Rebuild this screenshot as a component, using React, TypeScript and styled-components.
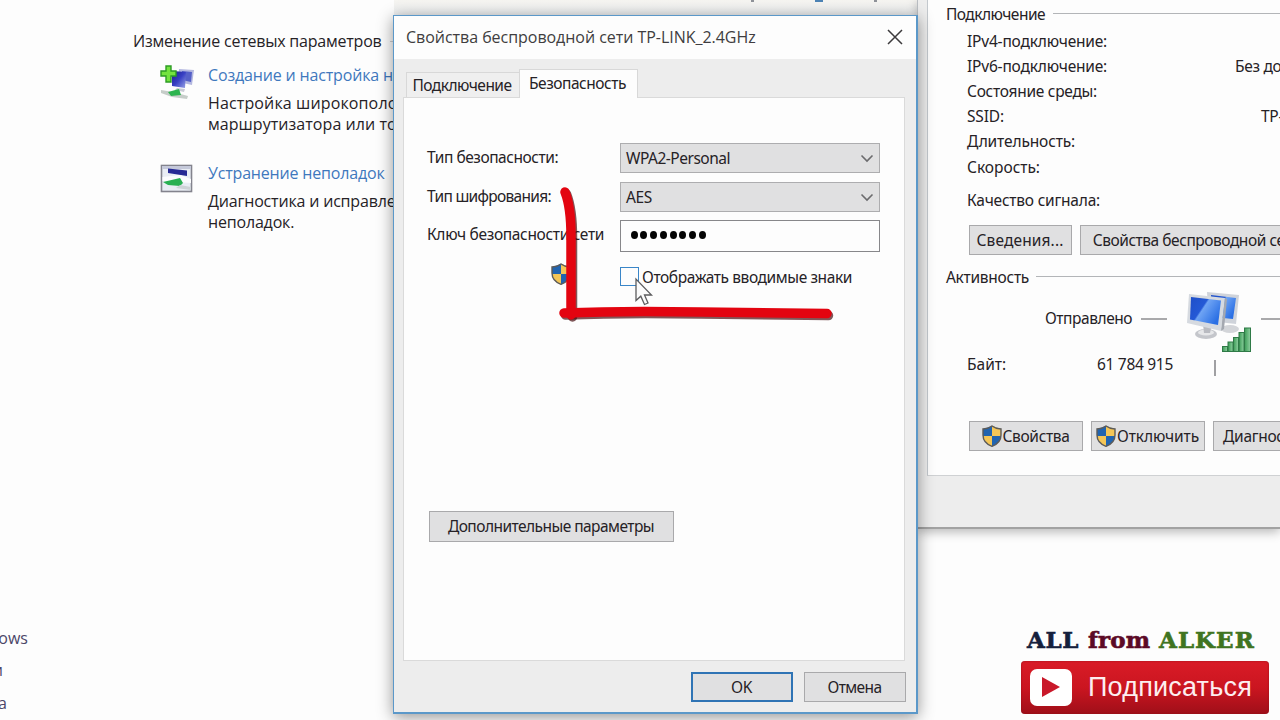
import styled, { createGlobalStyle } from 'styled-components';

const GlobalStyle = createGlobalStyle`
  * {
    box-sizing: border-box;
  }

  body {
    margin: 0;
    overflow: hidden;
    background: #fdfdfd;
  }
`;

const tahoma = `'Noto Sans', 'DejaVu Sans', sans-serif`;
const segoe = `'Open Sans', 'Noto Sans', sans-serif`;

const Desktop = styled.div`
  position: relative;
  width: 1280px;
  height: 720px;
  overflow: hidden;
  background: #fdfdfd;
  font-family: ${segoe};
  font-size: 16px;
  color: #262226;
`;

const Txt = styled.span<{ $ls?: number }>`
  letter-spacing: ${(p) => p.$ls ?? 0}px;
  white-space: pre;
`;

/* control panel page behind the dialogs */

const Page = styled.div`
  display: flex;
  width: 918px;
  height: 720px;
`;

const TopStrip = styled.div`
  position: absolute;
  top: 0;
  left: 394px;
  display: flex;
  align-items: flex-start;
  width: 523px;
  height: 15px;
  background: linear-gradient(#f6f5f1, #eceef0);
`;

const Tick = styled.i<{ $gap: number; $w: number; $color: string }>`
  margin-left: ${(p) => p.$gap}px;
  width: ${(p) => p.$w}px;
  height: 2px;
  background: ${(p) => p.$color};
`;

const Sidebar = styled.nav`
  display: flex;
  flex-direction: column;
  justify-content: flex-end;
  width: 132px;
  padding-bottom: 1px;
  color: #4b4668;
`;

const SideLink = styled.span<{ $end: number }>`
  display: flex;
  justify-content: flex-end;
  width: ${(p) => p.$end}px;
  height: 32.5px;
  overflow: hidden;
  font-size: 16px;
  line-height: 32px;
`;

const Main = styled.main`
  flex: 1;
  padding-top: 30px;
`;

const Heading = styled.div`
  display: flex;
  align-items: center;
  gap: 8px;
  height: 22px;
  padding-left: 1px;

  &::after {
    content: '';
    flex: 1;
    height: 1px;
    background: #cfcfd2;
  }
`;

const Task = styled.section<{ $top: number }>`
  display: grid;
  grid-template-columns: 48px 1fr;
  margin: ${(p) => p.$top}px 0 0 28px;
`;

const TaskText = styled.div`
  display: flex;
  flex-direction: column;
  line-height: 21px;
`;

const TaskLink = styled.a`
  margin-bottom: 7px;
  color: #3f78bd;
`;

/* shared controls */

const Button = styled.button<{ $w?: number; $h?: number; $primary?: boolean }>`
  display: flex;
  flex: none;
  align-items: center;
  justify-content: center;
  gap: 1px;
  width: ${(p) => p.$w}px;
  height: ${(p) => p.$h ?? 30}px;
  padding: 0 1px 1px 0;
  border: ${(p) => (p.$primary ? '2px solid #2f74b5' : '1px solid #a9a9ab')};
  background: #e0e0e1;
  color: #262226;
  font-family: ${tahoma};
  font-size: 15.5px;
  white-space: nowrap;
`;

/* connection status window */

const StatusWindow = styled.section`
  position: absolute;
  top: 0;
  left: 917px;
  width: 363px;
  height: 529px;
  padding-left: 9px;
  border-left: 1px solid #b9bdc2;
  border-bottom: 2px solid #a2a2a2;
  background: #ededed;
  box-shadow: 0 3px 10px rgba(0, 0, 0, 0.28);
  font-family: ${tahoma};
  font-size: 15.5px;
`;

const StatusPanel = styled.div`
  height: 476px;
  padding-left: 18px;
  border-left: 1px solid #c3c8cd;
  border-bottom: 1px solid #cfd1d3;
  background: #fdfdfd;
  overflow: hidden;
`;

const GroupTitle = styled.div<{ $h: number; $gap: number }>`
  display: flex;
  align-items: center;
  gap: ${(p) => p.$gap}px;
  height: ${(p) => p.$h}px;

  &::after {
    content: '';
    flex: 1;
    height: 1px;
    margin-bottom: 1px;
    background: #b3b5b8;
  }
`;

const InfoRow = styled.div<{ $split: number; $h?: number }>`
  display: grid;
  grid-template-columns: ${(p) => p.$split}px 1fr;
  align-items: center;
  height: ${(p) => p.$h ?? 25.2}px;
  padding-left: 21px;
`;

const ButtonRow = styled.div<{ $gap: number; $top?: number }>`
  display: flex;
  gap: ${(p) => p.$gap}px;
  margin-top: ${(p) => p.$top ?? 0}px;
  padding-left: 23px;
`;

const Activity = styled.div`
  display: grid;
  grid-template-columns: 95px 27px 20px 66px 6px 30px;
  align-items: start;
  height: 55px;
  padding-left: 99px;
`;

const SentLabel = styled.span`
  line-height: 40px;
`;

const Dash = styled.i<{ $col: number }>`
  grid-column: ${(p) => p.$col};
  grid-row: 1;
  height: 2px;
  margin-top: 20px;
  margin-left: ${(p) => (p.$col === 2 ? 1 : 2)}px;
  background: #a9a9ab;
`;

const Bytes = styled.div`
  display: flex;
  align-items: center;
  height: 22px;
  padding-left: 21px;
`;

const ByteLabel = styled.span`
  width: 130px;
`;

const ByteCount = styled.span`
  width: 117px;
`;

const VBar = styled.i`
  width: 2px;
  height: 16px;
  margin-top: 7px;
  background: #a0a0a3;
`;

/* wireless properties dialog */

const Dialog = styled.section`
  position: absolute;
  top: 15px;
  left: 393px;
  display: flex;
  flex-direction: column;
  width: 525px;
  height: 699px;
  border: solid #5b98c9;
  border-width: 1px 2px 2px 1px;
  background: #ededed;
  box-shadow: 0 3px 15px rgba(0, 0, 0, 0.42);
  font-family: ${tahoma};
  font-size: 15.5px;
`;

const TitleBar = styled.header`
  display: flex;
  align-items: center;
  justify-content: space-between;
  height: 43px;
  padding: 0 13px 1px 12px;
  background: #fdfdfd;
  color: #403d40;
  font-family: ${segoe};
  font-size: 16px;
`;

const Tabs = styled.div`
  display: flex;
  align-items: flex-end;
  height: 38px;
  padding-left: 12px;
`;

const Tab = styled.div<{ $active?: boolean; $w: number }>`
  display: flex;
  align-items: center;
  justify-content: center;
  width: ${(p) => p.$w}px;
  height: ${(p) => (p.$active ? 29 : 25)}px;
  padding-right: 2px;
  padding-bottom: ${(p) => (p.$active ? 2 : 0)}px;
  margin-bottom: ${(p) => (p.$active ? -1 : 0)}px;
  border: 1px solid #d8d8d8;
  border-bottom: 0;
  border-right-width: ${(p) => (p.$active ? 1 : 0)}px;
  background: ${(p) => (p.$active ? '#fdfdfd' : '#efefef')};
  z-index: ${(p) => (p.$active ? 1 : 0)};
`;

const TabPage = styled.div`
  width: 502px;
  height: 564px;
  margin-left: 9px;
  padding: 45px 23px 0;
  border: 1px solid #dadada;
  background: #fdfdfd;
`;

const Field = styled.div<{ $h: number }>`
  display: grid;
  grid-template-columns: 193px 260px;
  align-items: start;
  height: ${(p) => p.$h}px;
`;

const FieldLabel = styled.label`
  line-height: 29px;
  white-space: nowrap;
`;

const Select = styled.div`
  display: flex;
  align-items: center;
  justify-content: space-between;
  height: 30px;
  padding: 0 5px;
  border: 1px solid #adadaf;
  background: #e0e0e1;
`;

const KeyInput = styled.div`
  display: flex;
  gap: 2.8px;
  height: 32px;
  padding: 10px 0 0 9.500px;
  border: 1px solid #87878a;
  background: #fdfdfd;
`;

const Dot = styled.i`
  width: 7px;
  height: 8px;
  border-radius: 50%;
  background: #050505;
`;

const CheckRow = styled.div`
  display: flex;
  align-items: center;
  gap: 3px;
  height: 24px;
  padding-left: 124px;
`;

const ShieldSlot = styled.span`
  display: flex;
  width: 66px;
  margin-top: -6px;
`;

const Checkbox = styled.span`
  width: 19px;
  height: 19px;
  margin-top: -1px;
  border: 1px solid #3a86c8;
  background: #fdfdfd;
`;

const Advanced = styled.div`
  margin: 222px 0 0 2px;
`;

const Footer = styled.footer`
  display: flex;
  justify-content: flex-end;
  gap: 11px;
  padding: 11px 10px 0 0;
`;

/* annotations on top of the windows */

const Marker = styled.svg`
  position: absolute;
  top: 180px;
  left: 550px;
`;

const Cursor = styled.svg`
  position: absolute;
  top: 277px;
  left: 634px;
`;

const Promo = styled.aside`
  position: absolute;
  top: 625px;
  left: 1021px;
  width: 248px;
`;

const Brand = styled.div`
  display: flex;
  gap: 9px;
  height: 36px;
  padding-left: 6px;
  font: bold 23px/30px 'DejaVu Serif', 'Liberation Serif', serif;
`;

const Word = styled.span<{ $color: string; $ls: number }>`
  color: ${(p) => p.$color};
  letter-spacing: ${(p) => p.$ls}px;
  -webkit-text-stroke: 0.6px ${(p) => p.$color};
`;

const Subscribe = styled.div`
  display: flex;
  align-items: center;
  gap: 16px;
  height: 53px;
  padding: 0 0 1px 9px;
  border-radius: 4px;
  background: linear-gradient(#d91c27, #cb1520 50%, #9f0f19);
  box-shadow: inset 0 0 2px #8d1018;
  color: #fdeef0;
  font: 27px 'Liberation Sans', sans-serif;
`;

const PlayBox = styled.span`
  display: flex;
  align-items: center;
  justify-content: center;
  width: 42px;
  height: 37px;
  border-radius: 7px;
  background: #fff;
`;

const Shield = () => (
  <svg width="20" height="22" viewBox="0 0 20 22">
    <path d="M10 1 L19 4 V10 C19 15.5 15 19.5 10 21.3 C5 19.5 1 15.5 1 10 V4 Z" fill="#2164b0" />
    <path d="M10 1 L19 4 V11 H10 Z M1 11 H10 V21.3 C5 19.5 1.4 16 1 11 Z" fill="#f4c657" />
    <path
      d="M10 1 C8 2.6 4.5 3.8 1 4 V10 C1 15.5 5 19.5 10 21.3 C15 19.5 19 15.5 19 10 V4 C15.5 3.8 12 2.6 10 1 Z"
      fill="none"
      stroke="#5d5b58"
      strokeWidth="1.4"
    />
  </svg>
);

const Chevron = () => (
  <svg width="14" height="9" viewBox="0 0 14 9">
    <path d="M1.5 1.5 L7 7 L12.5 1.5" fill="none" stroke="#6b6b6d" strokeWidth="1.6" />
  </svg>
);

const AddNetworkIcon = () => (
  <svg width="36" height="36" viewBox="0 0 36 36">
    <defs>
      <linearGradient id="screen" x1="0" y1="0" x2="1" y2="1">
        <stop offset="0" stopColor="#1c1c8c" />
        <stop offset="0.5" stopColor="#3840c4" />
        <stop offset="1" stopColor="#9aa5e6" />
      </linearGradient>
    </defs>
    <path d="M19 4 L34 5 L32 20 L18 17 Z" fill="#b4b8e0" />
    <path d="M22 6 L32 7 L31 17 L22 15 Z" fill="#5560c8" />
    <path d="M12 6 L26 7 L25 23 L12 21 Z" fill="url(#screen)" />
    <path d="M17 23 L25 24 L24 27 L15 25 Z" fill="#c9cbd6" />
    <path d="M1 25 L13 27 L28 31 L27 34 L12 32 L1 28 Z" fill="#c6cdc9" />
    <path d="M8 27 L19 24 L21 30 L11 31 Z" fill="#2db44f" />
    <path
      d="M6 1 H11 V6 H16 V11 H11 V17 H6 V11 H1 V6 H6 Z"
      fill="#74e33f"
      stroke="#2d9c24"
      strokeWidth="1.4"
    />
  </svg>
);

const TroubleIcon = () => (
  <svg width="34" height="31" viewBox="0 -1 34 31">
    <rect x="1.5" y="1.5" width="30" height="26" fill="#e9edf4" stroke="#83838d" strokeWidth="1.6" />
    <path d="M2 2 H31 V5 H2 Z" fill="#c5c9da" />
    <path d="M8 4.5 L27 6.500 V12 L8 9 Z" fill="#262a94" />
    <path d="M2.5 13 L20 11 L31 15 L31 19 L2.5 17 Z" fill="#fbfcfd" />
    <path d="M3 18 L20 14 L23 19 L20 22 L8 21 Z" fill="#29b052" />
    <path d="M20 21 L31 23 V26 L16 24 Z" fill="#cdd3d6" />
  </svg>
);

const Computers = styled.svg`
  grid-column: 4;
  grid-row: 1;
  margin-top: -7px;
`;

const ComputersIcon = () => (
  <Computers width="66" height="62" viewBox="0 0 66 62">
    <defs>
      <linearGradient id="front" x1="0" y1="0" x2="1" y2="0.6">
        <stop offset="0" stopColor="#1f4fc8" />
        <stop offset="0.45" stopColor="#2459d6" />
        <stop offset="0.5" stopColor="#6fa4f4" />
        <stop offset="1" stopColor="#2a6fe4" />
      </linearGradient>
      <linearGradient id="bars" x1="0" y1="0" x2="1" y2="0">
        <stop offset="0" stopColor="#3c9c57" />
        <stop offset="1" stopColor="#8fd0a0" />
      </linearGradient>
    </defs>
    <ellipse cx="43" cy="38" rx="9" ry="4" fill="#d3d5d9" />
    <path d="M20 1 L52 4 L49 33 L22 30 Z" fill="#cfd3da" />
    <path d="M24 4 L49 7 L46 28 L26 26 Z" fill="url(#front)" />
    <ellipse cx="19" cy="43" rx="11" ry="5" fill="#c4c6cb" />
    <ellipse cx="19" cy="41.5" rx="8" ry="3" fill="#e6e7e9" />
    <path d="M16 33 H25 L23 42 H17 Z" fill="#b9bbc1" />
    <path d="M2 3 L38 7 L34 40 L0 32 Z" fill="#d6dae0" />
    <path d="M38 7 L34 40 L37 38 L40 8 Z" fill="#a4a8b0" />
    <path d="M4 6 L34 9.5 L31 34 L3 28.5 Z" fill="url(#front)" />
    <g fill="url(#bars)" stroke="#2f7a47" strokeWidth="1">
      <rect x="35.5" y="55.500" width="5" height="5" />
      <rect x="41" y="51" width="5" height="9.5" />
      <rect x="46.5" y="46.5" width="5" height="14" />
      <rect x="52" y="41.5" width="5" height="19" />
      <rect x="57.5" y="37" width="6" height="23.5" />
    </g>
  </Computers>
);

const info = [
  { label: 'IPv4-подключение:', ls: -0.19 },
  { label: 'IPv6-подключение:', ls: -0.19, value: 'Без доступа', split: 268 },
  { label: 'Состояние среды:', ls: -0.27 },
  { label: 'SSID:', ls: -0.15, value: 'TP-LINK', split: 294 },
  { label: 'Длительность:', ls: -0.13 },
  { label: 'Скорость:', ls: 0 },
];

export default function App() {
  return (
    <Desktop>
      <GlobalStyle />
      <Page>
        <Sidebar>
          <SideLink $end={28}>ows</SideLink>
          <SideLink $end={3}>и</SideLink>
          <SideLink $end={7}>а</SideLink>
        </Sidebar>
        <Main>
          <Heading>
            <Txt $ls={-0.22}>Изменение сетевых параметров</Txt>
          </Heading>
          <Task $top={13}>
            <AddNetworkIcon />
            <TaskText>
              <TaskLink>
                <Txt $ls={-0.16}>Создание и настройка н</Txt>
              </TaskLink>
              <Txt $ls={0.13}>Настройка широкополо</Txt>
              <Txt $ls={0.05}>маршрутизатора или то</Txt>
            </TaskText>
          </Task>
          <Task $top={28}>
            <TroubleIcon />
            <TaskText>
              <TaskLink>
                <Txt $ls={-0.18}>Устранение неполадок</Txt>
              </TaskLink>
              <Txt $ls={-0.18}>Диагностика и исправле</Txt>
              <Txt $ls={-0.18}>неполадок.</Txt>
            </TaskText>
          </Task>
        </Main>
      </Page>
      <TopStrip>
        <Tick $gap={357} $w={3} $color="#8f9299" />
        <Tick $gap={61} $w={8} $color="#4d83b5" />
        <Tick $gap={51} $w={3} $color="#8f9299" />
      </TopStrip>

      <StatusWindow>
        <StatusPanel>
          <GroupTitle $h={28} $gap={8}>
            <Txt $ls={-0.52}>Подключение</Txt>
          </GroupTitle>
          {info.map((row) => (
            <InfoRow key={row.label} $split={row.split ?? 268}>
              <Txt $ls={row.ls}>{row.label}</Txt>
              {row.value && <Txt $ls={-0.3}>{row.value}</Txt>}
            </InfoRow>
          ))}
          <InfoRow $split={268} $h={41}>
            <Txt $ls={-0.22}>Качество сигнала:</Txt>
          </InfoRow>
          <ButtonRow $gap={8} $top={5}>
            <Button $w={103}>
              <Txt $ls={0.13}>Сведения...</Txt>
            </Button>
            <Button $w={234}>
              <Txt $ls={-0.46}>Свойства беспроводной сети</Txt>
            </Button>
          </ButtonRow>
          <GroupTitle $h={43} $gap={7}>
            <Txt $ls={-0.27}>Активность</Txt>
          </GroupTitle>
          <Activity>
            <SentLabel>
              <Txt $ls={-0.45}>Отправлено</Txt>
            </SentLabel>
            <Dash $col={2} />
            <ComputersIcon />
            <Dash $col={6} />
          </Activity>
          <Bytes>
            <ByteLabel>Байт:</ByteLabel>
            <ByteCount>
              <Txt $ls={-0.3}>61 784 915</Txt>
            </ByteCount>
            <VBar />
          </Bytes>
          <ButtonRow $gap={8} $top={46}>
            <Button $w={114}>
              <Shield />
              <Txt $ls={-0.34}>Свойства</Txt>
            </Button>
            <Button $w={114}>
              <Shield />
              <Txt $ls={-0.1}>Отключить</Txt>
            </Button>
            <Button $w={114}>
              <Txt $ls={-0.3}>Диагностика</Txt>
            </Button>
          </ButtonRow>
        </StatusPanel>
      </StatusWindow>

      <Dialog>
        <TitleBar>
          <Txt $ls={-0.04}>Свойства беспроводной сети TP-LINK_2.4GHz</Txt>
          <svg width="16" height="16" viewBox="0 0 16 16">
            <path d="M1 1 L15 15 M15 1 L1 15" stroke="#3c3a3c" strokeWidth="1.5" />
          </svg>
        </TitleBar>
        <Tabs>
          <Tab $w={113}>
            <Txt $ls={-0.52}>Подключение</Txt>
          </Tab>
          <Tab $w={119} $active>
            <Txt $ls={-0.46}>Безопасность</Txt>
          </Tab>
        </Tabs>
        <TabPage>
          <Field $h={39}>
            <FieldLabel>
              <Txt $ls={-0.45}>Тип безопасности:</Txt>
            </FieldLabel>
            <Select>
              <Txt $ls={-0.49}>WPA2-Personal</Txt>
              <Chevron />
            </Select>
          </Field>
          <Field $h={38}>
            <FieldLabel>
              <Txt $ls={-0.69}>Тип шифрования:</Txt>
            </FieldLabel>
            <Select>
              <Txt $ls={-0.33}>AES</Txt>
              <Chevron />
            </Select>
          </Field>
          <Field $h={45}>
            <FieldLabel>
              <Txt $ls={-0.33}>Ключ безопасности сети</Txt>
            </FieldLabel>
            <KeyInput>
              {Array.from({ length: 8 }, (_, i) => (
                <Dot key={i} />
              ))}
            </KeyInput>
          </Field>
          <CheckRow>
            <ShieldSlot>
              <Shield />
            </ShieldSlot>
            <Checkbox />
            <Txt $ls={-0.4}>Отображать вводимые знаки</Txt>
          </CheckRow>
          <Advanced>
            <Button $w={245} $h={31}>
              <Txt $ls={-0.54}>Дополнительные параметры</Txt>
            </Button>
          </Advanced>
        </TabPage>
        <Footer>
          <Button $w={102} $primary>
            <Txt $ls={-0.3}>OK</Txt>
          </Button>
          <Button $w={102}>
            <Txt $ls={-0.58}>Отмена</Txt>
          </Button>
        </Footer>
      </Dialog>

      <Marker width="290" height="150" viewBox="0 0 290 150">
        <g fill="none" strokeLinecap="round" strokeLinejoin="round" strokeWidth="9.5">
          <g stroke="#4a1013" strokeOpacity="0.7" transform="translate(1.5 2)">
            <path d="M15 12 C19 22 21 36 21 56 V135" />
            <path d="M14 133 C60 131 100 131 150 132 L277 133.5" />
          </g>
          <g stroke="#e30410">
            <path d="M15 12 C19 22 21 36 21 56 V135" />
            <path d="M14 133 C60 131 100 131 150 132 L277 133.5" />
          </g>
        </g>
      </Marker>
      <Cursor width="20" height="30" viewBox="0 0 20 30">
        <path
          d="M2 2 V23.5 L6.8 19.2 L10.5 27.5 L14 26 L10.5 18 H17.5 Z"
          fill="#fbfbfb"
          stroke="#5c5c5e"
          strokeWidth="1.3"
        />
      </Cursor>

      <Promo>
        <Brand>
          <Word $color="#15203c" $ls={0.6}>ALL</Word>
          <Word $color="#5c0a26" $ls={0.1}>from</Word>
          <Word $color="#3f7421" $ls={1}>ALKER</Word>
        </Brand>
        <Subscribe>
          <PlayBox>
            <svg width="18" height="22" viewBox="0 0 18 22">
              <path d="M0 1 L18 11 L0 21 Z" fill="#c9182a" />
            </svg>
          </PlayBox>
          <Txt $ls={0.2}>Подписаться</Txt>
        </Subscribe>
      </Promo>
    </Desktop>
  );
}
